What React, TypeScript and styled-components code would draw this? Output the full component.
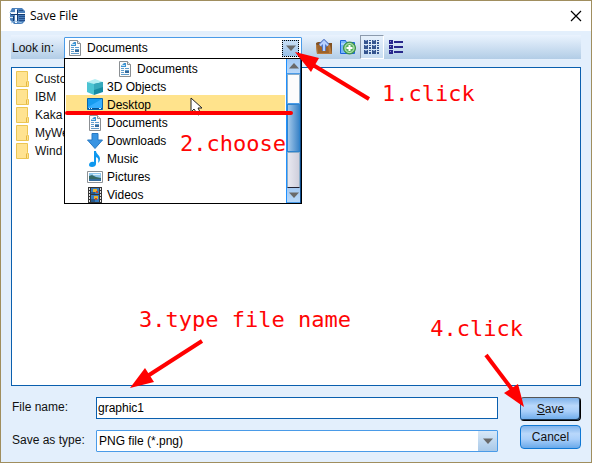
import React from "react";
import styled, { createGlobalStyle, css } from "styled-components";

const GlobalStyle = createGlobalStyle`
  *, *::before, *::after { box-sizing: border-box; }
  body { margin: 0; background: #e3effc; }
  button, input, select { font: inherit; color: inherit; }
`;

const Dialog = styled.form`
  position: relative;
  display: flex;
  flex-direction: column;
  min-height: 100vh;
  border: 1px solid #a08e5e;
  background: #e3effc;
  color: #111;
  font: 12px/16px "Liberation Sans", Arial, sans-serif;
`;

const TitleBar = styled.header`
  display: flex;
  align-items: center;
  gap: 4px;
  height: 30px;
  padding: 0 9px 0 8px;
  background: #fff;
`;

const Title = styled.h1`
  flex: 1;
  margin: 0;
  font: 400 12px/16px "Open Sans", "Noto Sans", sans-serif;
  color: #000;
`;

const PlainButton = styled.button`
  display: flex;
  padding: 0;
  border: 0;
  background: none;
`;

const Content = styled.main`
  display: flex;
  flex: 1;
  flex-direction: column;
  padding: 4px 10px 10px;
`;

const Toolbar = styled.div`
  display: flex;
  align-items: center;
  height: 24px;
  padding-left: 1px;
  background: linear-gradient(#eaf3fe, #b2cde6);
`;

const LookLabel = styled.label`
  width: 52px;
  padding-top: 2px;
`;

const Combo = styled.div<{ $open?: boolean }>`
  position: relative;
  display: flex;
  align-items: center;
  width: 100%;
  height: 22px;
  border: 1px solid #4a9be8;
  border-radius: 1px;
  background: #fff;
  ${(p) =>
    p.$open &&
    css`
      width: 238px;
      margin-top: 2px;
    `}
`;

const ComboSelect = styled.select<{ $icon?: boolean }>`
  appearance: none;
  flex: 1;
  align-self: stretch;
  min-width: 0;
  padding: 0 0 0 ${(p) => (p.$icon ? "4px" : "2px")};
  border: 0;
  outline: 0;
  background: transparent;
  color: #000;
`;

const ComboIcon = styled.span`
  display: flex;
  padding-left: 2px;
`;

const ComboArrow = styled.span<{ $focused?: boolean }>`
  display: flex;
  align-items: center;
  justify-content: center;
  width: 19px;
  height: 20px;
  background: linear-gradient(#d8e8f8, #a9c9e8);
  ${(p) =>
    p.$focused &&
    css`
      height: 17px;
      margin-right: 2px;
      width: 17px;
      border: 1px dotted #000;
      background: linear-gradient(#c9dff5, #98c0e8);
    `}
`;

const Popup = styled.div`
  position: absolute;
  z-index: 2;
  top: 20px;
  left: -1px;
  right: -1px;
  display: flex;
  height: 146px;
  border: 1px solid #000;
  background: #fff;
`;

const Places = styled.ul`
  flex: 1;
  margin: 0;
  padding: 0 1px;
  list-style: none;
`;

const Place = styled.li<{ $depth: number; $active?: boolean }>`
  display: flex;
  align-items: center;
  gap: 4px;
  height: 18px;
  padding-top: 2px;
  padding-left: ${(p) => (p.$depth === 2 ? 51 : 21)}px;
  background: ${(p) => (p.$active ? "#ffe38c" : "transparent")};
  color: #000;
`;

const ScrollBar = styled.div`
  display: flex;
  flex-direction: column;
  width: 15px;
  border-left: 1px solid #1e90ff;
  border-right: 1px solid #0c4b8c;
`;

const ScrollButton = styled.button`
  display: flex;
  align-items: center;
  justify-content: center;
  height: 15px;
  padding: 0;
  border: 0;
  border-bottom: 1px solid #4a9be8;
  background: linear-gradient(#a4c9f2, #b9d9fa);
`;

const Track = styled.div<{ $below?: boolean }>`
  flex: ${(p) => (p.$below ? 1 : "0 0 30px")};
  border: 1px solid #8badc9;
  border-bottom-color: ${(p) => (p.$below ? "#223" : "#4a9be8")};
  background: ${(p) =>
    p.$below ? "linear-gradient(90deg, #e8e8f0, #cfcfdc)" : "#fcfcfc"};
`;

const Thumb = styled.div`
  height: 48px;
  border: 1px solid #2f83cc;
  background: linear-gradient(90deg, #a3c8ea, #3d85c8);
`;

const Tools = styled.div`
  display: flex;
  align-items: center;
  padding-left: 10px;
`;

const ToolButton = styled.button<{ $pressed?: boolean }>`
  display: flex;
  align-items: center;
  justify-content: center;
  width: 24px;
  height: 24px;
  padding: 0;
  border: 1px solid transparent;
  background: none;
  ${(p) =>
    p.$pressed &&
    css`
      border-color: #8c9aac #fff #fff #8c9aac;
      background: linear-gradient(#e6f0fb, #c9def2);
    `}
`;

const FileList = styled.ul`
  flex: 1;
  margin: 8px 0 11px;
  padding: 2px 4px;
  border: 1px solid #0a5fae;
  background: #fff;
  list-style: none;
`;

const FileItem = styled.li`
  display: flex;
  align-items: center;
  gap: 4px;
  height: 18px;
`;

const Footer = styled.footer`
  display: flex;
  gap: 22px;
`;

const Fields = styled.div`
  display: grid;
  flex: 1;
  grid-template-columns: 84px 1fr;
  grid-auto-rows: 22px;
  row-gap: 11px;
  padding-left: 1px;
`;

const FieldLabel = styled.label`
  line-height: 20px;
`;

const NameInput = styled.input`
  width: 100%;
  min-width: 0;
  height: 22px;
  padding: 0 1px;
  border: 1px solid #0a5fae;
  outline: 0;
  background: #fff;
  color: #000;
`;

const Actions = styled.div`
  display: flex;
  flex-direction: column;
  gap: 4px;
  width: 61px;
`;

const ActionButton = styled.button<{ $primary?: boolean }>`
  height: 24px;
  padding: 0;
  border: 1px solid #0f78d4;
  border-radius: 4px;
  background: linear-gradient(#7fb2ea, #b9d8fb 35%, #a9cffa 60%, #69a9ea);
  color: #111;
  ${(p) =>
    p.$primary &&
    css`
      border-color: #555 #000 #000 #1c5f9f;
      box-shadow: inset -1px -1px 0 #1c3550;
    `}
`;

const Note = styled.span`
  position: absolute;
  z-index: 3;
  color: #ff0505;
  font: 22px/26px "DejaVu Sans Mono", monospace;
  white-space: nowrap;
  pointer-events: none;
`;
const ClickNote = styled(Note)`
  top: 80px;
  left: 381px;
`;
const ChooseNote = styled(Note)`
  top: 130px;
  left: 179px;
`;
const TypeNote = styled(Note)`
  bottom: 129px;
  left: 138px;
`;
const SaveNote = styled(Note)`
  bottom: 120px;
  right: 68px;
`;

const Mark = styled.svg`
  position: absolute;
  z-index: 3;
  pointer-events: none;
`;
const ClickArrow = styled(Mark)`
  top: 49px;
  left: 292px;
`;
const ChooseLine = styled(Mark)`
  top: 96px;
  left: 63px;
`;
const TypeArrow = styled(Mark)`
  bottom: 71px;
  left: 127px;
`;
const SaveArrow = styled(Mark)`
  bottom: 51px;
  right: 60px;
`;

const AppIcon = () => (
  <svg width="17" height="17" viewBox="0 0 17 17" aria-hidden="true">
    <path d="M3 0h10l3 3v10l-3 3H5l-4-4V4z" fill="#4a80bb" />
    <path d="M10 6.500h6M10 8.500h6M10 10.500h6M10 12.500h6M10 2.500h4" stroke="#234d8a" />
    <path d="M0 4h6v1H0zM0 9h4v1H0z" fill="#dbeaf8" />
    <path d="M6 1h2v14H6zM2 5h14v1H2z" fill="#f5faff" />
    <path d="M8 2h1v12H8zM4 8h1v6H4zM2 6h14v1H2z" fill="#123a70" />
    <path d="M2 15l4-2 7 2" stroke="#9cc2e6" fill="none" />
  </svg>
);

const CloseIcon = () => (
  <svg width="12" height="12" viewBox="0 0 12 12" aria-hidden="true">
    <path d="M1 1l10 10M11 1L1 11" stroke="#000" strokeWidth="1.2" />
  </svg>
);

const DocumentIcon = () => (
  <svg width="16" height="16" viewBox="0 0 16 16" aria-hidden="true">
    <path d="M2.500.5h8l3 3v12h-11z" fill="#fbfbfb" stroke="#8b8f93" />
    <path d="M10.500.5v3h3" fill="#eee" stroke="#8b8f93" />
    <path
      d="M4 7.500h3M8 7.500h4M4 9.500h3M4 11.500h3M4 13.500h8M8 9.500h4"
      stroke="#5f9ccb"
    />
    <path d="M4 6V5l3-3h2v4z" fill="#3c93d2" />
    <path d="M5 4h3v1H5z" fill="#c5e2f5" />
    <path d="M8 10h4v2H8z" fill="#35699a" />
  </svg>
);

const CubeIcon = () => (
  <svg width="16" height="16" viewBox="0 0 16 16" aria-hidden="true">
    <path d="M0 3l8-3 8 3-8 3z" fill="#b5eef3" />
    <path d="M0 3l7 2v11l-7-3z" fill="#4cc4d3" />
    <path d="M16 3L7 5v11l9-3z" fill="#168ca4" />
    <path d="M7 5l9-2v5l-9 3z" fill="#37a9bc" />
  </svg>
);

const DesktopIcon = () => (
  <svg width="16" height="16" viewBox="0 0 16 16" aria-hidden="true">
    <path d="M.5 1.500h15v11H.5z" fill="#169cf0" stroke="#0867b0" />
    <path d="M1 10L15 2v9H1z" fill="#37afff" />
    <path d="M1 11.500h14" stroke="#0c5491" />
    <path d="M2 11.500h1M4 11.500h1M12 11.500h2" stroke="#d5efff" />
  </svg>
);

const DownloadIcon = () => (
  <svg width="16" height="16" viewBox="0 0 16 16" aria-hidden="true">
    <path d="M5 .5h6V7h4.500L8 15.500.5 7H5z" fill="#3994e2" stroke="#2879c2" />
  </svg>
);

const MusicIcon = () => (
  <svg width="16" height="16" viewBox="0 0 16 16" aria-hidden="true">
    <path
      d="M7 0h2c0 3 4 4 4 8 0 2-1 3-2 4 1-4 0-5-2-6v7c0 2-2 3-4 3s-3-1-3-2c0-2 2-4 5-3z"
      fill="#0e98ef"
    />
  </svg>
);

const PictureIcon = () => (
  <svg width="16" height="16" viewBox="0 0 16 16" aria-hidden="true">
    <path d="M.5 2.500h15v11H.5z" fill="#fff" stroke="#8d9296" />
    <path d="M2 4h12v8H2z" fill="#8fc6ec" />
    <path d="M2 7l3-1 4 2 5 1v2H2z" fill="#356965" />
    <path d="M2 10h12v2H2z" fill="#336c9d" />
    <path d="M6 5h7v1H6z" fill="#dff1fc" />
  </svg>
);

const VideoIcon = () => (
  <svg width="16" height="16" viewBox="0 0 16 16" aria-hidden="true">
    <path d="M1 0h14v16H1z" fill="#353535" />
    <path d="M2.500 1v14M13.500 1v14" stroke="#e5e5e5" strokeDasharray="2 1" />
    <path d="M4 1h8v6H4zM4 8h8v7H4z" fill="#347bc0" />
    <path d="M6 2h4v3H6zM7 9h4v3H7z" fill="#e7b22e" />
    <path d="M4 5h4v2H4zM4 12h4v3H4z" fill="#28588a" />
    <path d="M9 4h2v2H9zM8 11h2v2H8z" fill="#b94b35" />
  </svg>
);

const FolderIcon = () => (
  <svg width="15" height="17" viewBox="0 0 15 17" aria-hidden="true">
    <path d="M.5.5h11v9l1 1v5H.5z" fill="#ffe391" stroke="#ecc653" />
    <path d="M10.500 15v-4l1-1" stroke="#e5b842" fill="none" />
  </svg>
);

const FolderUpIcon = () => (
  <svg width="16" height="16" viewBox="0 0 16 16" aria-hidden="true">
    <path d="M0 4l2-1h4l1 1h9v11H1z" fill="#805021" />
    <path d="M0 6h14l2 9H1z" fill="#b8793a" />
    <path d="M1 6h11l1 8H2z" fill="#9c632b" />
    <path
      d="M8 12V3M4 6.500L8 2.500l4 4"
      fill="none"
      stroke="#5577c5"
      strokeWidth="4"
    />
    <path
      d="M8 12V3M4 6.500L8 2.500l4 4"
      fill="none"
      stroke="#b7d1ff"
      strokeWidth="2"
    />
  </svg>
);

const NewFolderIcon = () => (
  <svg width="16" height="16" viewBox="0 0 16 16" aria-hidden="true">
    <path d="M.5 14.500v-13h5l1 2h8v11z" fill="#77b5fb" stroke="#1c64db" />
    <path d="M1 5h13" stroke="#d7eaff" />
    <circle cx="9.500" cy="9" r="6" fill="#5cb35e" stroke="#378d45" />
    <circle cx="9.500" cy="9" r="4.500" fill="none" stroke="#c8eac7" />
    <path d="M9.500 6v6M6.500 9h6" stroke="#fff" strokeWidth="2" />
  </svg>
);

const GridIcon = () => (
  <svg width="16" height="16" viewBox="0 0 16 16" aria-hidden="true">
    {[1, 6, 11].map((y) => (
      <g key={y}>
        <path d={`M0 ${y}h4v4H0zM8 ${y}h4v4H8z`} fill="#34558f" />
        <path
          d={`M5 ${y}h2v1H5zM5 ${y + 2}h2v2H5zM13 ${y}h2v1h-2zM13 ${y + 2}h2v2h-2z`}
          fill="#34558f"
        />
        <path d={`M1 ${y}h2v1H1zM9 ${y}h2v1H9z`} fill="#8ba4cf" />
      </g>
    ))}
  </svg>
);

const DetailsIcon = () => (
  <svg width="16" height="16" viewBox="0 0 16 16" aria-hidden="true">
    {[1, 6, 11].map((y) => (
      <g key={y}>
        <path d={`M1 ${y}h4v4H1z`} fill="#28288c" />
        <path d={`M2 ${y + 1}h1v1H2z`} fill="#8d8dd0" />
        <path d={`M6 ${y + 1}h9v2H6z`} fill="#28288c" />
      </g>
    ))}
  </svg>
);

const Triangle = ({ up = false }: { up?: boolean }) => (
  <svg width="10" height="6" viewBox="0 0 10 6" aria-hidden="true">
    <path d={up ? "M0 5.500L5 0l5 5.500z" : "M0 .5h10L5 6z"} fill="#6a6a6a" />
  </svg>
);

const places = [
  { name: "Documents", depth: 2, Icon: DocumentIcon },
  { name: "3D Objects", depth: 1, Icon: CubeIcon },
  { name: "Desktop", depth: 1, Icon: DesktopIcon },
  { name: "Documents", depth: 1, Icon: DocumentIcon },
  { name: "Downloads", depth: 1, Icon: DownloadIcon },
  { name: "Music", depth: 1, Icon: MusicIcon },
  { name: "Pictures", depth: 1, Icon: PictureIcon },
  { name: "Videos", depth: 1, Icon: VideoIcon },
];

const folders = ["Custo", "IBM", "Kaka", "MyWe", "Wind"];

export default function App() {
  return (
    <>
      <GlobalStyle />
      <Dialog onSubmit={(e) => e.preventDefault()}>
        <TitleBar>
          <AppIcon />
          <Title>Save File</Title>
          <PlainButton type="button" aria-label="Close">
            <CloseIcon />
          </PlainButton>
        </TitleBar>
        <Content>
          <Toolbar>
            <LookLabel htmlFor="look-in">Look in:</LookLabel>
            <Combo $open>
              <ComboIcon>
                <DocumentIcon />
              </ComboIcon>
              <ComboSelect id="look-in" $icon defaultValue="Documents">
                <option>Documents</option>
                <option>Desktop</option>
              </ComboSelect>
              <ComboArrow $focused>
                <Triangle />
              </ComboArrow>
              <Popup>
                <Places role="listbox" aria-label="Places">
                  {places.map(({ name, depth, Icon }, i) => (
                    <Place
                      key={i}
                      role="option"
                      aria-selected={name === "Desktop"}
                      $depth={depth}
                      $active={name === "Desktop"}
                    >
                      <Icon />
                      {name}
                    </Place>
                  ))}
                </Places>
                <ScrollBar>
                  <ScrollButton type="button" aria-label="Scroll up">
                    <Triangle up />
                  </ScrollButton>
                  <Track />
                  <Thumb />
                  <Track $below />
                  <ScrollButton type="button" aria-label="Scroll down">
                    <Triangle />
                  </ScrollButton>
                </ScrollBar>
              </Popup>
            </Combo>
            <Tools>
              <ToolButton type="button" aria-label="Up one level">
                <FolderUpIcon />
              </ToolButton>
              <ToolButton type="button" aria-label="New folder">
                <NewFolderIcon />
              </ToolButton>
              <ToolButton type="button" aria-label="List" $pressed>
                <GridIcon />
              </ToolButton>
              <ToolButton type="button" aria-label="Details">
                <DetailsIcon />
              </ToolButton>
            </Tools>
          </Toolbar>
          <FileList>
            {folders.map((name) => (
              <FileItem key={name}>
                <FolderIcon />
                {name}
              </FileItem>
            ))}
          </FileList>
          <Footer>
            <Fields>
              <FieldLabel htmlFor="file-name">File name:</FieldLabel>
              <NameInput id="file-name" defaultValue="graphic1" />
              <FieldLabel htmlFor="file-type">Save as type:</FieldLabel>
              <Combo>
                <ComboSelect id="file-type">
                  <option>PNG file (*.png)</option>
                </ComboSelect>
                <ComboArrow>
                  <Triangle />
                </ComboArrow>
              </Combo>
            </Fields>
            <Actions>
              <ActionButton type="submit" $primary>
                <u>S</u>ave
              </ActionButton>
              <ActionButton type="button">Cancel</ActionButton>
            </Actions>
          </Footer>
        </Content>

        <ChooseLine width="232" height="24" viewBox="0 0 232 24">
          <path
            d="M127 1v14l3-3 4 6 3-1-3-6h4z"
            fill="#fff"
            stroke="#222"
          />
          <path
            d="M3 16H227"
            stroke="#f00"
            strokeWidth="4"
            strokeLinecap="round"
          />
        </ChooseLine>
        <ClickArrow width="80" height="52" viewBox="0 0 80 52" fill="#f00">
          <path d="M20 15L76 49" stroke="#f00" strokeWidth="4" />
          <path d="M2 2l24 6-8 14z" />
        </ClickArrow>
        <TypeArrow width="80" height="54" viewBox="0 0 80 54" fill="#f00">
          <path d="M18 40L74 4" stroke="#f00" strokeWidth="4" />
          <path d="M2 51L17 31l9 14z" />
        </TypeArrow>
        <SaveArrow width="48" height="60" viewBox="0 0 48 60" fill="#f00">
          <path d="M3 4L31 41" stroke="#f00" strokeWidth="4" />
          <path d="M41 56L21 42 35 33z" />
        </SaveArrow>
        <ClickNote>1.click</ClickNote>
        <ChooseNote>2.choose</ChooseNote>
        <TypeNote>3.type file name</TypeNote>
        <SaveNote>4.click</SaveNote>
      </Dialog>
    </>
  );
}
